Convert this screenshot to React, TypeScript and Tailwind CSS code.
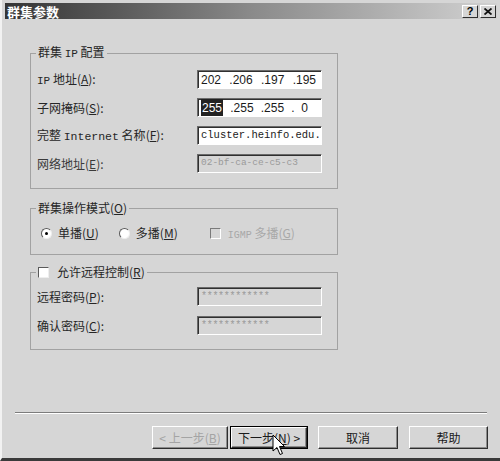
import React from "react";

const cjk = "font-['Noto_Sans_CJK_SC','Noto_Sans',sans-serif]";
const mono = "font-['Liberation_Mono',monospace]";

function U({ c }: { c: string }) {
  return (
    <>
      (<span className="underline">{c}</span>)
    </>
  );
}

function Field({ children, disabled }: { children?: React.ReactNode; disabled?: boolean }) {
  return (
    <div
      className={`w-[125px] h-[19px] flex items-center px-[3px] overflow-hidden whitespace-nowrap border border-t-[#6a6a6a] border-l-[#6a6a6a] border-b-white border-r-white shadow-[inset_1px_1px_0_#303030] ${
        disabled ? "bg-[#d6d6d6] text-[#9a9a9a]" : "bg-white text-[#1a1a1a]"
      }`}
    >
      {children}
    </div>
  );
}

function Row({ label, children }: { label: React.ReactNode; children: React.ReactNode }) {
  return (
    <div className="flex items-center justify-between pl-[6px] pr-[15px] h-[19px]">
      <span className="text-[12px] text-[#262626]">{label}</span>
      {children}
    </div>
  );
}

function Btn({ children, w, disabled, def, cls }: { children: React.ReactNode; w: string; disabled?: boolean; def?: boolean; cls?: string }) {
  const inner = (
    <div
      className={`h-full w-full flex items-center justify-center text-[12px] border border-t-white border-l-white border-r-[#2e2e2e] border-b-[#2e2e2e] shadow-[inset_-1px_-1px_0_#8c8c8c] ${
        disabled ? "text-[#a4a4a4]" : "text-[#1a1a1a]"
      }`}
    >
      {children}
    </div>
  );
  return (
    <div className={`${w} h-[23px] ${cls ?? ""} ${def ? "border border-black" : ""}`}>{inner}</div>
  );
}

export default function App() {
  return (
    <div className={`relative w-[500px] h-[461px] bg-[#d6d6d6] flex flex-col border-l-2 border-l-[#f2f2f2] border-b-[3px] border-b-[#3a3a3a] ${cjk}`}>
      {/* title bar */}
      <div className="mt-[3px] ml-[3px] mr-[3px] h-[16px] flex items-center justify-between bg-gradient-to-r from-[#353535] via-[#8a8a8a] to-[#d2d2d2]">
        <span className="pl-[2px] text-white font-bold text-[13px] leading-none">群集参数</span>
        <div className="flex gap-[2px] pr-[1px]">
          <div className="w-[16px] h-[13px] bg-[#d6d6d6] border border-t-white border-l-white border-r-[#2e2e2e] border-b-[#2e2e2e] flex items-center justify-center text-[11px] font-bold leading-none font-['Liberation_Sans',sans-serif]">?</div>
          <div className="w-[16px] h-[13px] bg-[#d6d6d6] border border-t-white border-l-white border-r-[#2e2e2e] border-b-[#2e2e2e] flex items-center justify-center">
            <svg width="8" height="7" viewBox="0 0 8 7">
              <path d="M0.5 0.5 L7.5 6.5 M7.5 0.5 L0.5 6.5" stroke="#111" strokeWidth="1.8" />
            </svg>
          </div>
        </div>
      </div>

      <div className="pl-[28px] flex flex-col">
        {/* group 1 */}
        <fieldset className="mt-[26px] w-[308px] border border-[#a2a2a2] pb-[15px]">
          <legend className="ml-[5px] px-[2px] text-[12px] leading-[14px] text-[#262626]">
            群集 <span className={`${mono} text-[11px]`}>IP</span> 配置
          </legend>
          <div className="mt-[9px] flex flex-col gap-[9px]">
            <Row label={<><span className={`${mono} text-[11px]`}>IP</span> 地址<U c="A" />:</>}>
              <Field>
                <span className="font-['Liberation_Sans',sans-serif] text-[12px] w-full flex justify-between pr-[2px]">
                  <span>202</span><span>.206</span><span>.197</span><span>.195</span>
                </span>
              </Field>
            </Row>
            <Row label={<>子网掩码<U c="S" />:</>}>
              <Field>
                <span className="font-['Liberation_Sans',sans-serif] text-[12px] w-full flex justify-between pr-[10px]">
                  <span className="bg-[#222] text-white px-[1px]">255</span><span>.255</span><span>.255</span><span>.&nbsp;&nbsp;0</span>
                </span>
              </Field>
            </Row>
            <Row label={<>完整 <span className={`${mono} text-[11.5px]`}>Internet</span> 名称<U c="F" />:</>}>
              <Field>
                <span className={`${mono} text-[10.5px]`}>cluster.heinfo.edu.</span>
              </Field>
            </Row>
            <Row label={<span className="text-[#3a3a3a]">网络地址<U c="E" />:</span>}>
              <Field disabled>
                <span className={`${mono} text-[9.5px]`}>02-bf-ca-ce-c5-c3</span>
              </Field>
            </Row>
          </div>
        </fieldset>

        {/* group 2 */}
        <fieldset className="mt-[12px] w-[308px] border border-[#a2a2a2] pb-[14px]">
          <legend className="ml-[5px] px-[2px] text-[12px] leading-[14px] text-[#262626]">群集操作模式<U c="O" /></legend>
          <div className="mt-[11px] h-[14px] flex items-center pl-[10px] text-[12px] text-[#262626]">
            <span className="w-[11px] h-[11px] rounded-full bg-white border border-t-[#5a5a5a] border-l-[#5a5a5a] border-b-[#eee] border-r-[#eee] flex items-center justify-center">
              <span className="w-[3px] h-[3px] rounded-full bg-black" />
            </span>
            <span className="ml-[6px]">单播<U c="U" /></span>
            <span className="ml-[20px] w-[11px] h-[11px] rounded-full bg-white border border-t-[#5a5a5a] border-l-[#5a5a5a] border-b-[#eee] border-r-[#eee]" />
            <span className="ml-[6px]">多播<U c="M" /></span>
            <span className="ml-[32px] w-[11px] h-[11px] bg-[#d6d6d6] border border-t-[#7a7a7a] border-l-[#7a7a7a] border-b-white border-r-white" />
            <span className="ml-[7px] text-[#a8a8a8]">
              <span className={`${mono} text-[10px]`}>IGMP</span> 多播<U c="G" />
            </span>
          </div>
        </fieldset>

        {/* group 3 */}
        <fieldset className="mt-[10px] w-[308px] border border-[#a2a2a2] pb-[14px]">
          <legend className="ml-[5px] px-[2px] text-[12px] leading-[14px] text-[#262626] flex items-center">
            <span className="w-[11px] h-[11px] bg-white border border-t-[#5a5a5a] border-l-[#5a5a5a] border-b-[#eee] border-r-[#eee]" />
            <span className="ml-[8px]">允许远程控制<U c="R" /></span>
          </legend>
          <div className="mt-[8px] flex flex-col gap-[10px]">
            <Row label={<>远程密码<U c="P" />:</>}>
              <Field disabled>
                <span className={`${mono} text-[10px] tracking-[-0.3px]`}>************</span>
              </Field>
            </Row>
            <Row label={<>确认密码<U c="C" />:</>}>
              <Field disabled>
                <span className={`${mono} text-[10px] tracking-[-0.3px]`}>************</span>
              </Field>
            </Row>
          </div>
        </fieldset>
      </div>

      {/* footer */}
      <div className="mt-auto pb-[9px]">
        <div className="ml-[13px] w-[472px] border-t border-t-[#7c7c7c] border-b border-b-white" />
        <div className="mt-[12px] flex justify-end pr-[12px]">
          <Btn w="w-[76px]" disabled>&lt; 上一步<U c="B" /></Btn>
          <Btn w="w-[78px]" def cls="ml-[2px]">下一步<U c="N" />&nbsp;&gt;</Btn>
          <Btn w="w-[80px]" cls="ml-[10px]">取消</Btn>
          <Btn w="w-[79px]" cls="ml-[11px]">帮助</Btn>
        </div>
      </div>

      {/* mouse pointer */}
      <svg className="absolute left-[270px] top-[434px]" width="14" height="22" viewBox="0 0 14 22">
        <path d="M1 1 L1 17 L5 13.5 L8 20.5 L10.5 19.5 L7.5 12.5 L12.5 12.5 Z" fill="#fff" stroke="#000" strokeWidth="1" />
      </svg>
    </div>
  );
}
